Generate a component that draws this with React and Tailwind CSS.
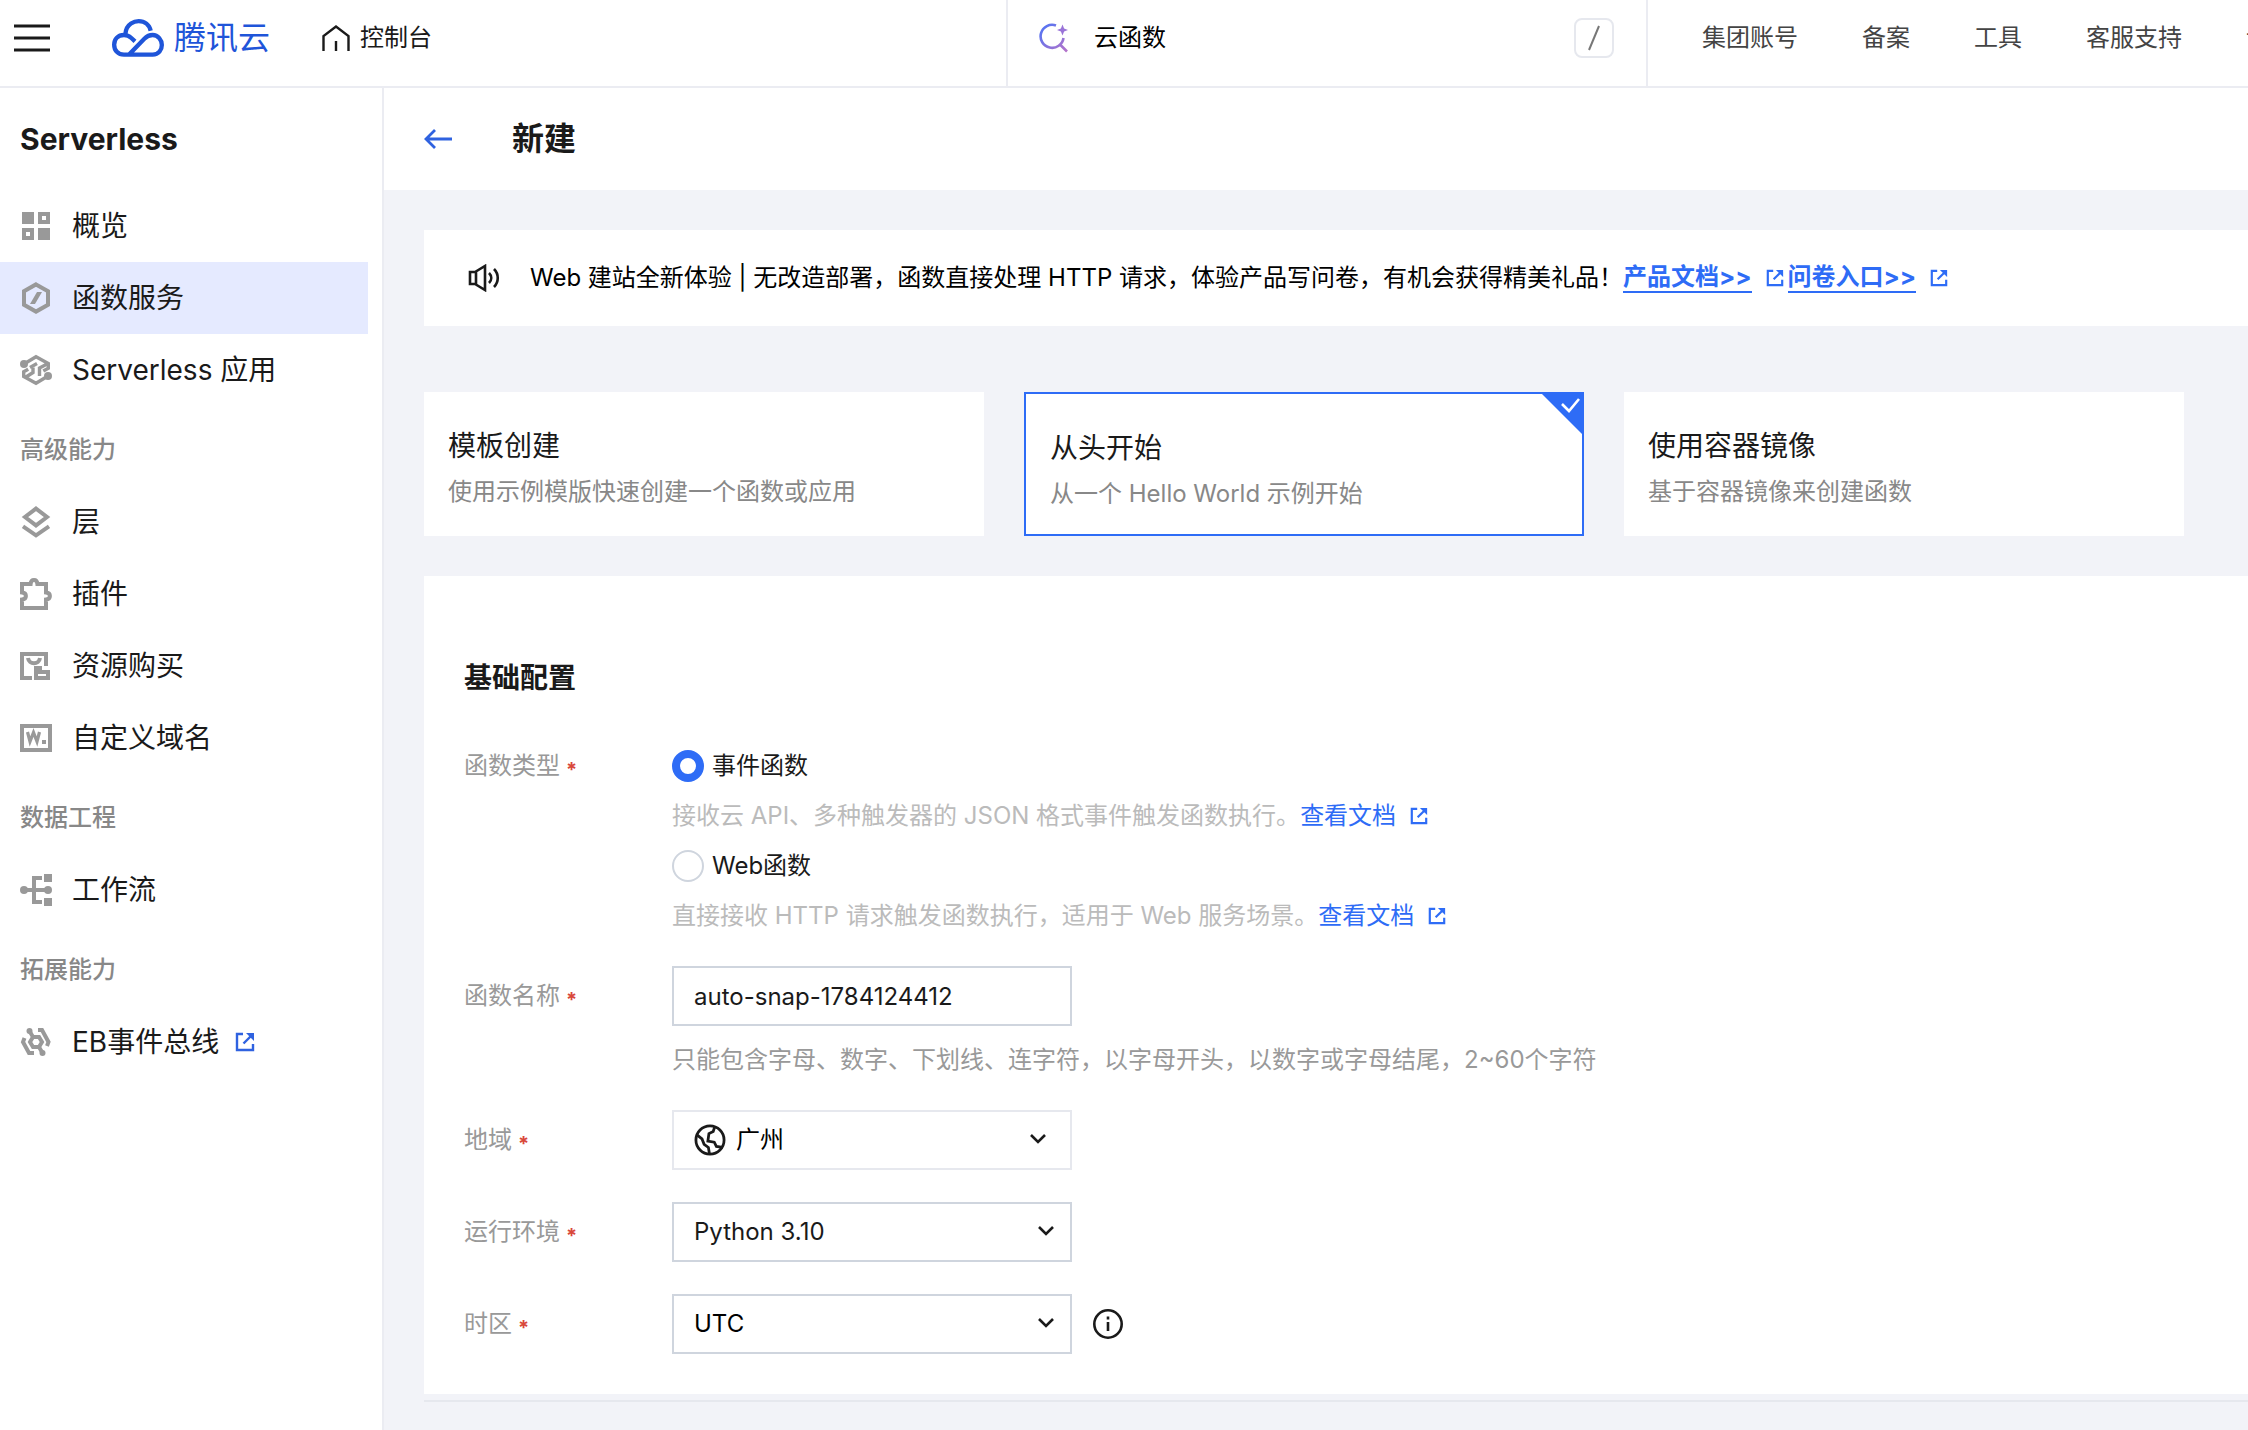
import { useState } from 'react';

const menu = [
  {
    items: [
      { name: '概览', icon: 'overview' },
      { name: '函数服务', icon: 'func' },
      { name: 'Serverless 应用', icon: 'app' },
    ],
  },
  {
    title: '高级能力',
    items: [
      { name: '层', icon: 'layer' },
      { name: '插件', icon: 'plugin' },
      { name: '资源购买', icon: 'buy' },
      { name: '自定义域名', icon: 'domain' },
    ],
  },
  {
    title: '数据工程',
    items: [{ name: '工作流', icon: 'flow' }],
  },
  {
    title: '拓展能力',
    items: [{ name: 'EB事件总线', icon: 'bus', external: true }],
  },
];

const topLinks = ['集团账号', '备案', '工具', '客服支持', '计费'];

const modes = [
  { id: 'template', title: '模板创建', desc: '使用示例模版快速创建一个函数或应用' },
  { id: 'scratch', title: '从头开始', desc: '从一个 Hello World 示例开始' },
  { id: 'image', title: '使用容器镜像', desc: '基于容器镜像来创建函数' },
];

const types = [
  { id: 'event', name: '事件函数', desc: '接收云 API、多种触发器的 JSON 格式事件触发函数执行。' },
  { id: 'web', name: 'Web函数', desc: '直接接收 HTTP 请求触发函数执行，适用于 Web 服务场景。' },
];

function MenuIcon({ name }) {
  const common = { viewBox: '0 0 32 32', className: 'w-8 h-8 shrink-0 text-[#999999]', fill: 'none', stroke: 'currentColor', strokeWidth: 4 };
  if (name === 'overview') {
    return (
      <svg {...common}>
        <path d="M2 2h12v12H2zM18 18h12v12H18z" fill="currentColor" stroke="none" />
        <path d="M20 4h8v8h-8zM4 20h8v8H4z" />
      </svg>
    );
  }
  if (name === 'func') {
    return (
      <svg {...common}>
        <path d="M16 2.4 28 9.2v13.6L16 29.6 4 22.8V9.2z" />
        <path d="M17 10h5l-7 12h-5z" fill="currentColor" stroke="none" />
      </svg>
    );
  }
  if (name === 'app') {
    return (
      <svg {...common} strokeWidth="3.4">
        <circle cx="4" cy="10" r="4" fill="currentColor" stroke="none" />
        <circle cx="28" cy="22" r="4" fill="currentColor" stroke="none" />
        <path d="M4 10 16 2.800 28.300 9.600v4.600l-5 2.800M28 9.500l-8.500 4.500v8" />
        <path d="M28 22 16 29.200 3.700 22.400v-4.600l4.500-2.500M6 23l7-4.500V13.500" />
        <path d="M10 13.500 17 9.500" />
      </svg>
    );
  }
  if (name === 'layer') {
    return (
      <svg {...common}>
        <path d="M16 2.6 27 11l-11 8.4L5 11z" />
        <path d="m3 20.4 13 9 13-9" />
      </svg>
    );
  }
  if (name === 'plugin') {
    return (
      <svg {...common}>
        <path d="M2 6h8.6c.4-5.200 6.400-5.200 6.800 0H26v8.400c5.200.4 5.200 6.800 0 7.200V30H2v-8.400c5.200-.4 5.200-6.800 0-7.200z" />
      </svg>
    );
  }
  if (name === 'buy') {
    return (
      <svg {...common}>
        <path d="M12 28H2V4h24v12" />
        <path d="M8 8c1 7 11 7 12 0" />
        <path d="M16 22h12v6H16zM14 18h8" />
      </svg>
    );
  }
  if (name === 'domain') {
    return (
      <svg {...common}>
        <path d="M2 4h28v24H2z" />
        <path d="m7.500 10 2.500 9.500 3.500-9 3.500 9 2.500-9.500" strokeWidth="3.200" />
        <path d="M22 18h4v4h-4z" fill="currentColor" stroke="none" />
      </svg>
    );
  }
  if (name === 'flow') {
    return (
      <svg {...common}>
        <path d="M4 16h24M22 4h-8v24h8" />
        <circle cx="4" cy="16" r="4" fill="currentColor" stroke="none" />
        <circle cx="28" cy="16" r="4" fill="currentColor" stroke="none" />
        <path d="M24 0h8v8h-8zM24 24h8v8h-8z" fill="currentColor" stroke="none" />
      </svg>
    );
  }
  return (
    <svg {...common}>
      <circle cx="9.500" cy="5" r="3" fill="currentColor" stroke="none" />
      <circle cx="22.500" cy="27" r="3" fill="currentColor" stroke="none" />
      <path d="M13 11h6l3 5-3 5h-6l-3-5z" />
      <path d="m9.500 5 3.500 6M19 21l3.500 6M4.500 12 3 16l6 11h5M18 4h4l6.500 12-1.500 4" />
    </svg>
  );
}

function ExternalIcon({ className }) {
  return (
    <svg viewBox="0 0 20 20" className={className} fill="none" stroke="currentColor" strokeWidth="2.400">
      <path d="M8 2H2v16h16v-6" />
      <path d="M8.500 11.500 17 3" />
      <path d="M11 1h8v8z" fill="currentColor" stroke="none" />
    </svg>
  );
}

function Chevron({ className }) {
  return (
    <svg viewBox="0 0 16 10" className={className} fill="none" stroke="#1a1a1a" strokeWidth="2.600">
      <path d="m1 1 7 7 7-7" />
    </svg>
  );
}

function Required() {
  return <span className="pt-2 text-xl font-bold text-[#d9483b]">*</span>;
}

function FormRow({ label, htmlFor, children }) {
  return (
    <div className="flex items-start">
      <label htmlFor={htmlFor} className="w-52 shrink-0 flex items-center gap-1.5 h-15 text-[#999999]">
        {label}
        <Required />
      </label>
      <div className="min-w-0 flex-1">{children}</div>
    </div>
  );
}

function TopBar() {
  return (
    <header className="flex h-22 border-b-2 border-[#ebecf2] bg-white">
      <div className="flex flex-1 items-center pl-3.5 pb-2.5">
        <button type="button" aria-label="菜单" className="w-9 h-7">
          <svg viewBox="0 0 36 28" className="w-9 h-7" stroke="#1a1a1a" strokeWidth="3">
            <path d="M0 2h36M0 14h36M0 26h36" />
          </svg>
        </button>
        <a href="#" className="ml-15.5 flex items-center gap-2.5 text-[32px] leading-10 text-[#1f55d9]">
          <svg viewBox="0 0 156 114" className="w-13 h-10" fill="none" stroke="currentColor" strokeWidth="13">
            <path d="M40 46C42 12 70 6.500 80 6.500c18 0 32 11 36 29" />
            <path d="M69 67 58 57c-8-7-14-9-22-9C18 48 6.500 60 6.500 77S18 107 36 107h86c18 0 27.500-14 27.500-29S138 48 122 48c-10 0-18 4-25 11l-45 47" />
          </svg>
          腾讯云
        </a>
        <a href="#" className="ml-13 flex items-center gap-2.5 text-[#1a1a1a]">
          <svg viewBox="0 0 28 26" className="w-7 h-7" fill="none" stroke="currentColor" strokeWidth="2.400">
            <path d="M1.500 26V11L14 1.500 26.500 11v15M14 16v10" />
          </svg>
          控制台
        </a>
      </div>
      <div className="flex w-[642px] shrink-0 items-center border-x-2 border-[#ebecf2] pl-7.5 pr-8 pb-2.5">
        <svg viewBox="0 0 30 30" className="w-7.5 h-7.5 shrink-0" fill="none">
          <defs>
            <linearGradient id="searchColor" x1="0" y1="0" x2="1" y2="1">
              <stop offset="0" stopColor="#4f74f5" />
              <stop offset="1" stopColor="#b573c9" />
            </linearGradient>
          </defs>
          <path d="M18 2.500A11.500 11.500 0 1 0 25.500 15M22 21.500l7 7" stroke="url(#searchColor)" strokeWidth="2.600" />
          <path d="m24.500 1.500 1.600 3.900 3.900 1.600-3.900 1.600-1.600 3.900-1.600-3.900L19 7l3.900-1.600z" fill="#9a74d8" />
        </svg>
        <input aria-label="搜索" defaultValue="云函数" className="ml-6.5 min-w-0 flex-1 text-black outline-none" />
        <kbd className="flex w-10 h-10 items-center justify-center rounded-lg border-2 border-[#e6e8ee]">
          <svg viewBox="0 0 12 26" className="w-3 h-6.5" stroke="#777777" strokeWidth="2">
            <path d="M11 1 1 25" />
          </svg>
        </kbd>
      </div>
      <nav className="flex w-[600px] shrink-0 items-center gap-16 overflow-hidden pl-13.5 pb-2.5 text-[#444444]">
        {topLinks.map((link) => (
          <a key={link} href="#" className="shrink-0">{link}</a>
        ))}
      </nav>
    </header>
  );
}

function Sidebar() {
  return (
    <aside className="w-96 shrink-0 border-r-2 border-[#ebecf2] bg-white">
      <h2 className="flex h-[102px] items-center pl-5 text-3xl font-bold text-[#1a1a1a]">Serverless</h2>
      {menu.map((group, index) => (
        <div key={index}>
          {group.title && (
            <h3 className="flex h-20 items-center pl-5 pt-2 font-medium text-[#888888]">{group.title}</h3>
          )}
          {group.items.map((item) => (
            <a
              key={item.name}
              href="#"
              className={`mr-3.5 flex h-18 items-center gap-5 pl-5 text-[28px] text-[#1a1a1a] ${item.icon === 'func' ? 'bg-[#e5eaff]' : ''}`}
            >
              <MenuIcon name={item.icon} />
              <span className="flex items-center gap-4">
                {item.name}
                {item.external && <ExternalIcon className="w-5 h-5 text-[#2f62e0]" />}
              </span>
            </a>
          ))}
        </div>
      ))}
    </aside>
  );
}

export default function App() {
  const [mode, setMode] = useState('scratch');
  const [type, setType] = useState('event');
  const [name, setName] = useState('auto-snap-1784124412');

  return (
    <div className="flex min-h-screen flex-col overflow-hidden bg-[#f2f3f8] font-[Inter,'Noto_Sans_CJK_SC',sans-serif] text-2xl leading-9">
      <TopBar />
      <div className="flex flex-1">
        <Sidebar />
        <main className="min-w-0 flex-1">
          <div className="flex h-[102px] items-center bg-white pl-10">
            <button type="button" aria-label="返回">
              <svg viewBox="0 0 28 20" className="w-7 h-5" fill="none" stroke="#2f62e0" strokeWidth="2.800">
                <path d="M11 1 2 10l9 9M2 10h26" />
              </svg>
            </button>
            <h1 className="ml-15 text-[32px] font-bold text-[#1a1a1a]">新建</h1>
          </div>

          <div className="pl-10 pt-10">
            <div className="flex h-24 items-center bg-white pl-11 whitespace-nowrap text-black">
              <svg viewBox="0 0 32 28" className="w-8 h-7 shrink-0" fill="none" stroke="#1a1a1a" strokeWidth="2.600">
                <path d="M2 8h5l10-6v24L7 20H2zM8 8v12M21 9c3 3 3 7 0 10M26 5c5 5 5 13 0 18" />
              </svg>
              <p className="ml-7.5">Web 建站全新体验 | 无改造部署，函数直接处理 HTTP 请求，体验产品写问卷，有机会获得精美礼品！</p>
              <a href="#" className="flex items-center gap-3.5 font-bold text-[#2e6cf6]">
                <span className="border-b-2 leading-7">产品文档&gt;&gt;</span>
                <ExternalIcon className="w-4.5 h-4.5" />
              </a>
              <a href="#" className="ml-1 flex items-center gap-3.5 font-bold text-[#2e6cf6]">
                <span className="border-b-2 leading-7">问卷入口&gt;&gt;</span>
                <ExternalIcon className="w-4.5 h-4.5" />
              </a>
            </div>

            <div className="mt-[66px] mr-16 grid grid-cols-3 gap-10">
              {modes.map((item) => (
                <button
                  key={item.id}
                  type="button"
                  onClick={() => setMode(item.id)}
                  className={`relative flex h-36 flex-col gap-2 bg-white pt-8.5 pl-6 text-left ${mode === item.id ? 'border-2 border-[#2e6cf6]' : ''}`}
                >
                  <span className="text-[28px] leading-10 text-[#1a1a1a]">{item.title}</span>
                  <span className="text-[#888888]">{item.desc}</span>
                  {mode === item.id && (
                    <svg viewBox="0 0 40 40" className="absolute top-0 right-0 w-10 h-10" fill="none">
                      <path d="M0 0h40v40z" fill="#2e6cf6" />
                      <path d="m20 10 7 7 10-12" stroke="#ffffff" strokeWidth="2.600" />
                    </svg>
                  )}
                </button>
              ))}
            </div>

            <form className="mt-10 bg-white px-10 pt-[82px] pb-10">
              <h2 className="text-[28px] leading-10 font-bold text-[#1a1a1a]">基础配置</h2>
              <div className="mt-[50px] flex flex-col gap-8">
                <div className="flex items-start" role="radiogroup" aria-label="函数类型">
                  <span className="w-52 shrink-0 flex items-center gap-1.5 h-9 text-[#999999]">
                    函数类型
                    <Required />
                  </span>
                  <div className="flex flex-col gap-3.5">
                    {types.map((item) => (
                      <div key={item.id} className="flex flex-col gap-3.5">
                        <label className="flex items-center gap-2 text-[#1a1a1a]">
                          <input
                            type="radio"
                            name="type"
                            checked={type === item.id}
                            onChange={() => setType(item.id)}
                            className="w-8 h-8 appearance-none rounded-full border-2 border-[#cfd5de] bg-white checked:border-8 checked:border-[#2e6cf6]"
                          />
                          {item.name}
                        </label>
                        <p className="flex items-center text-[#bbbbbb]">
                          {item.desc}
                          <a href="#" className="flex items-center gap-3.5 text-[#2e6cf6]">
                            查看文档
                            <ExternalIcon className="w-4.5 h-4.5" />
                          </a>
                        </p>
                      </div>
                    ))}
                  </div>
                </div>

                <FormRow label="函数名称" htmlFor="name">
                  <input
                    id="name"
                    value={name}
                    onChange={(e) => setName(e.target.value)}
                    className="block w-100 h-15 border-2 border-[#cfd5de] px-5 text-[#1a1a1a] outline-none"
                  />
                  <p className="mt-4 text-[#999999]">只能包含字母、数字、下划线、连字符，以字母开头，以数字或字母结尾，2~60个字符</p>
                </FormRow>

                <FormRow label="地域" htmlFor="region">
                  <div className="relative w-100">
                    <select id="region" className="block w-full h-15 appearance-none border-2 border-[#e6e8ee] pl-15.5 pr-14 text-black outline-none">
                      <option>广州</option>
                    </select>
                    <svg viewBox="0 0 30 30" className="pointer-events-none absolute left-5.5 top-3.5 w-8 h-8" fill="none" stroke="#1a1a1a" strokeWidth="2.600">
                      <circle cx="15" cy="15" r="13.200" />
                      <path d="M19.500 2.500 18 7l-4 2-1 7 6 1 2 4 6 1M2.500 10l5 4 2 5 4 3 1 6" />
                    </svg>
                    <Chevron className="pointer-events-none absolute right-6.5 top-6 w-4 h-2.5" />
                  </div>
                </FormRow>

                <FormRow label="运行环境" htmlFor="runtime">
                  <div className="relative w-100">
                    <select id="runtime" className="block w-full h-15 appearance-none border-2 border-[#cfd5de] px-5 text-[#1a1a1a] outline-none">
                      <option>Python 3.10</option>
                    </select>
                    <Chevron className="pointer-events-none absolute right-4.5 top-6 w-4 h-2.5" />
                  </div>
                </FormRow>

                <FormRow label="时区" htmlFor="timezone">
                  <div className="flex items-center gap-5">
                    <div className="relative w-100">
                      <select id="timezone" className="block w-full h-15 appearance-none border-2 border-[#cfd5de] px-5 text-black outline-none">
                        <option>UTC</option>
                      </select>
                      <Chevron className="pointer-events-none absolute right-4.5 top-6 w-4 h-2.5" />
                    </div>
                    <svg viewBox="0 0 32 32" className="w-8 h-8" fill="none" stroke="#1a1a1a" strokeWidth="2.600">
                      <circle cx="16" cy="16" r="13.700" />
                      <path d="M16 14v9M16 8.500v3" />
                    </svg>
                  </div>
                </FormRow>
              </div>
            </form>
            <div className="mt-1.5 border-t-2 border-[#e6e8ee]"></div>
          </div>
        </main>
      </div>
    </div>
  );
}
